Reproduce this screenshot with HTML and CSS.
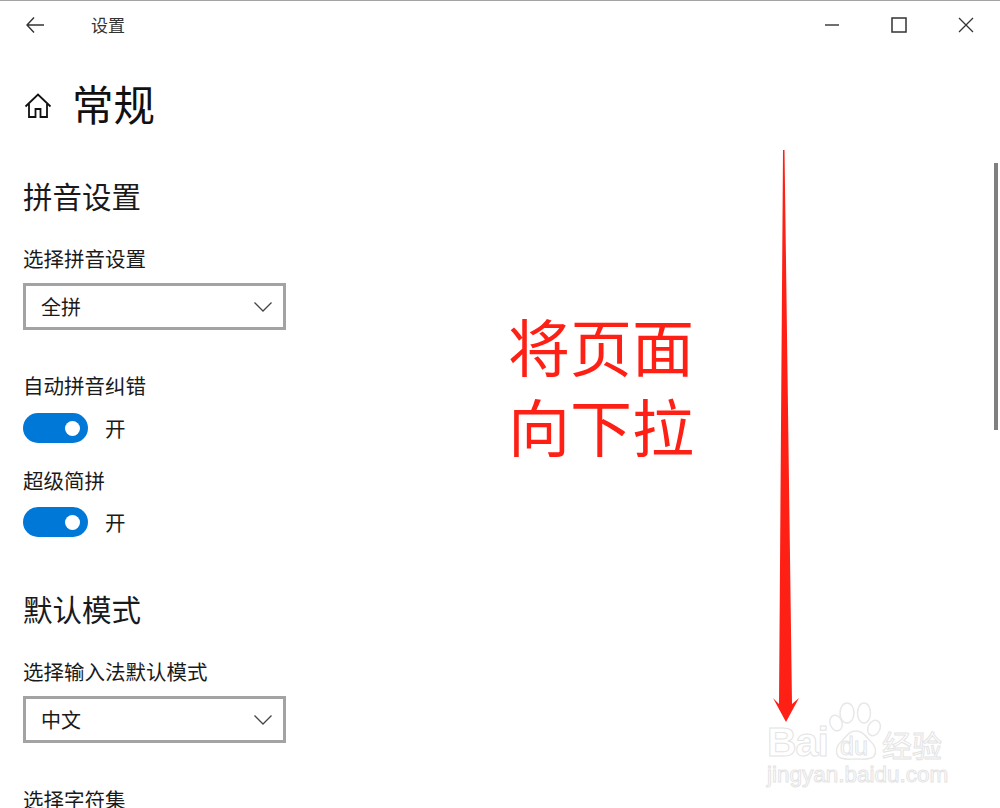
FILE: index.html
```html
<!doctype html>
<html lang="zh-CN">
<head>
  <meta charset="UTF-8">
  <title>设置</title>
  <link rel="stylesheet" href="styles.css">
</head>
<body>
  <div class="window">
    <header class="titlebar">
      <svg class="back-icon" width="18" height="16" viewBox="0 0 18 16"><path d="M8 .5 1 8l7 7.500M1 8h17" fill="none" stroke="#333" stroke-width="1.4"/></svg>
      <span class="app-title">设置</span>
      <div class="window-controls">
        <svg width="16" height="16" viewBox="0 0 16 16"><path d="M1 8h14" stroke="#222" stroke-width="1.3"/></svg>
        <svg width="16" height="16" viewBox="0 0 16 16"><rect x="1" y="1" width="14" height="14" fill="none" stroke="#333" stroke-width="1.5"/></svg>
        <svg width="16" height="16" viewBox="0 0 16 16"><path d="m1 1 14 14M15 1 1 15" stroke="#333" stroke-width="1.3"/></svg>
      </div>
    </header>

    <main class="content">
      <div class="page-head">
        <svg class="home-icon" width="28" height="26" viewBox="0 0 28 26"><path d="M1.500 13.500 14 1.500l12.500 12M5 11v13h6.500v-8h5v8H23V11" fill="none" stroke="#111" stroke-width="1.800"/></svg>
        <h1>常规</h1>
      </div>

      <h2 class="section-first">拼音设置</h2>
      <div class="field-label">选择拼音设置</div>
      <div class="combo">
        <span>全拼</span>
        <svg width="18" height="10" viewBox="0 0 18 10"><path d="m.5.5 8.500 8.500L17.500.5" fill="none" stroke="#444" stroke-width="1.3"/></svg>
      </div>

      <div class="field-label label-toggle">自动拼音纠错</div>
      <div class="toggle-row"><span class="toggle"><i></i></span><span>开</span></div>

      <div class="field-label label-toggle2">超级简拼</div>
      <div class="toggle-row"><span class="toggle"><i></i></span><span>开</span></div>

      <h2 class="section-second">默认模式</h2>
      <div class="field-label">选择输入法默认模式</div>
      <div class="combo">
        <span>中文</span>
        <svg width="18" height="10" viewBox="0 0 18 10"><path d="m.5.5 8.500 8.500L17.500.5" fill="none" stroke="#444" stroke-width="1.3"/></svg>
      </div>
      <div class="field-label label-charset">选择字符集</div>
    </main>

    <div class="scrollbar"></div>

    <!-- annotation drawn over the screenshot -->
    <div class="note">将页面<br>向下拉</div>
    <svg class="arrow" width="30" height="575" viewBox="0 0 30 575"><path d="M13 0h1.500L22 554l7-6-13 24-13-24 6 6z" fill="#ff2015"/></svg>

    <div class="watermark">
      <svg width="62" height="62" viewBox="0 0 62 62" class="paw">
        <g fill="#fff" stroke="#e8e8e8" stroke-width="1.500">
          <ellipse cx="10" cy="23" rx="6" ry="8" transform="rotate(-20 10 23)"/>
          <ellipse cx="21" cy="13" rx="7" ry="10"/>
          <ellipse cx="38" cy="13" rx="6.500" ry="10"/>
          <ellipse cx="48" cy="28" rx="6" ry="8" transform="rotate(25 48 28)"/>
          <path d="M30 31c7 0 10 6 15 11 6 5 6 14 0 16-5 2-10 1-15 1s-10 1-15-1c-6-2-6-11 0-16 5-5 8-11 15-11z"/>
        </g>
      </svg>
      <span class="wm-bai">Bai</span>
      <span class="wm-du">du</span>
      <span class="wm-jy">经验</span>
      <span class="wm-url">jingyan.baidu.com</span>
    </div>
  </div>
</body>
</html>
```

FILE: styles.css
```css
* {
  box-sizing: border-box;
}
html, body {
  margin: 0;
  height: 100%;
}
body {
  font-family: "Noto Sans CJK SC", "Noto Sans", sans-serif;
  background: #fff;
  color: #1a1a1a;
  overflow: hidden;
}
.window {
  position: relative;
  width: 1000px;
  height: 808px;
  overflow: hidden;
  border-top: 1px solid #a3a3a3;
}
.titlebar {
  display: flex;
  align-items: center;
  height: 47px;
  padding-left: 26px;
}
.back-icon {
  margin-right: 47px;
}
.app-title {
  font-size: 17px;
  line-height: 47px;
  color: #333;
}
.window-controls {
  display: flex;
  gap: 51px;
  margin-left: auto;
  margin-right: 26px;
}
.content {
  padding-left: 23px;
}
.page-head {
  display: flex;
  align-items: center;
  height: 60px;
  margin-top: 26px;
}
.home-icon {
  margin-top: 3px;
  margin-left: 1px;
  margin-right: 20px;
}
h1 {
  margin: 0;
  padding-bottom: 2px;
  font-size: 41.500px;
  font-weight: 400;
  line-height: 60px;
  color: #111;
}
h2 {
  margin: 0;
  font-size: 29.500px;
  font-weight: 400;
  line-height: 40px;
}
.section-first {
  margin-top: 41px;
}
.section-second {
  margin-top: 51px;
}
.field-label {
  font-size: 20.500px;
  line-height: 30px;
  margin-top: 28px;
}
.combo {
  display: flex;
  align-items: center;
  justify-content: space-between;
  width: 263px;
  height: 47px;
  margin-top: 10px;
  padding: 0 11px 0 15px;
  border: 3px solid #a3a3a3;
  font-size: 20px;
}
.label-toggle {
  margin-top: 40px;
}
.label-toggle2 {
  margin-top: 22px;
}
.label-charset {
  margin-top: 41px;
}
.toggle-row {
  display: flex;
  align-items: center;
  gap: 17px;
  height: 30px;
  margin-top: 13px;
  font-size: 20.500px;
}
.label-toggle2 + .toggle-row {
  margin-top: 12px;
}
.toggle {
  display: flex;
  align-items: center;
  justify-content: flex-end;
  width: 65px;
  height: 30px;
  padding-right: 8px;
  border-radius: 15px;
  background: #0078d7;
}
.toggle i {
  width: 15px;
  height: 15px;
  border-radius: 50%;
  background: #fff;
}
.scrollbar {
  position: absolute;
  top: 162px;
  right: 2px;
  width: 4px;
  height: 267px;
  background: #808080;
}
.note {
  position: absolute;
  left: 508px;
  top: 304px;
  font-size: 62px;
  line-height: 80px;
  color: #ff2015;
}
.arrow {
  position: absolute;
  left: 770px;
  top: 149px;
}
.watermark {
  position: absolute;
  left: 766px;
  top: 699px;
  width: 185px;
  height: 90px;
  color: #fff;
  font-family: "Liberation Sans", sans-serif;
  -webkit-text-stroke: 1px #e4e4e4;
}
.paw {
  position: absolute;
  left: 60px;
  top: 0;
}
.wm-bai, .wm-du, .wm-jy, .wm-url {
  position: absolute;
  white-space: nowrap;
}
.wm-bai {
  left: 1px;
  top: 19px;
  font-size: 41px;
  font-weight: 700;
  line-height: 46px;
  letter-spacing: -1px;
}
.wm-du {
  left: 74px;
  top: 32px;
  font-size: 25px;
  line-height: 28px;
}
.wm-jy {
  left: 116px;
  top: 24px;
  font-family: "Noto Sans CJK SC", sans-serif;
  font-size: 30px;
  line-height: 40px;
}
.wm-url {
  left: 1px;
  top: 62px;
  font-size: 22.500px;
  line-height: 26px;
}
```
